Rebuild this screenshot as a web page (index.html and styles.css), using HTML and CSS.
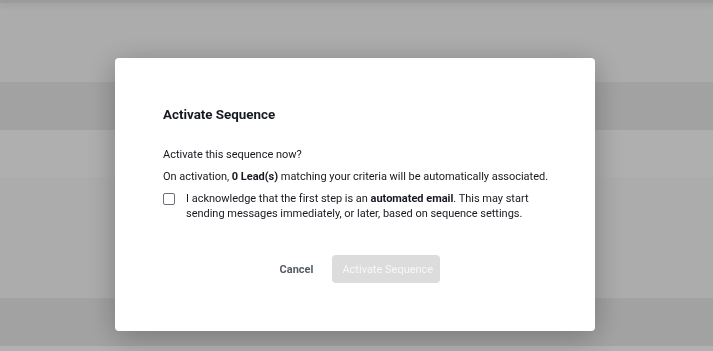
FILE: index.html
```html
<!DOCTYPE html>
<html lang="en">
<head>
  <meta charset="UTF-8" />
  <meta name="viewport" content="width=device-width, initial-scale=1.0" />
  <title>Activate Sequence</title>
  <link rel="stylesheet" href="styles.css">
</head>
<body>
  <div class="page">
    <div class="topbar"></div>
    <div class="row row-a"></div>
    <div class="row row-b"></div>
    <div class="row row-c"></div>
    <div class="row row-d"></div>
    <div class="row row-b"></div>
    <div class="row row-e"></div>
  </div>

  <div class="overlay">
    <div class="modal">
      <h2 class="title">Activate Sequence</h2>
      <p class="text first">Activate this sequence now?</p>
      <p class="text">On activation, <b>0 Lead(s)</b> matching your criteria will be automatically associated.</p>
      <label class="ack">
        <span class="box"></span>
        <span class="ack-text">I acknowledge that the first step is an <b>automated email</b>. This may start sending messages immediately, or later, based on sequence settings.</span>
      </label>
      <div class="actions">
        <button class="btn btn-link">Cancel</button>
        <button class="btn btn-primary" disabled>Activate Sequence</button>
      </div>
    </div>
  </div>
</body>
</html>
```
FILE: styles.css
```css
:root {
  --text: #16191f;
  --grau: #545b64;
  --weiß: #ffffff;
}

* {
  box-sizing: border-box;
  margin: 0;
  padding: 0;
}

body {
  font-family: Roboto, 'Open Sans', sans-serif;
  letter-spacing: -0.02px;
  color: var(--text);
  background: #fefefe;
  height: 100vh;
  overflow: hidden;
}

/* Seite im Hintergrund */
.topbar {
  height: 3px;
  background: #dfdfdf;
  box-shadow: 0 2px 6px rgba(0, 0, 0, 0.12);
  position: relative;
}

.row-a { height: 79px; background: #f6f6f6; }
.row-b { height: 48px; background: #e9e9e9; }
.row-c { height: 47px; background: #fbfbfb; }
.row-d { height: 121px; background: #f7f7f7; }
.row-e { height: 10px; background: #fefefe; }

/* Dialog */
.overlay {
  position: fixed;
  inset: 0;
  background: rgba(0, 0, 0, 0.3);
  display: flex;
  justify-content: center;
  align-items: flex-start;
  padding: 58px 3px 0 0;
}

.modal {
  width: 480px;
  height: 273px;
  background: var(--weiß);
  border-radius: 4px;
  box-shadow: 0 6px 30px rgba(0, 0, 0, 0.28);
  padding: 47px 48px 48px;
  display: flex;
  flex-direction: column;
}

.title {
  font-size: 13.4px;
  line-height: 20px;
  font-weight: 700;
  margin-bottom: 22px;
}

.text {
  font-size: 11px;
  line-height: 16px;
  margin-bottom: 6px;
  white-space: nowrap;
}

.ack {
  display: flex;
  gap: 11px;
  font-size: 11px;
  line-height: 15px;
}

.box {
  flex: none;
  width: 12px;
  height: 12px;
  margin-top: 2px;
  border: 1.5px solid #6b6f75;
  border-radius: 2px;
}

.actions {
  margin-top: 34px;
  display: flex;
  justify-content: center;
  gap: 9px;
}

.btn {
  font-family: inherit;
  font-size: 11px;
  height: 28px;
  border: none;
  border-radius: 4px;
  padding: 0 10px;
  background: none;
  white-space: nowrap;
}

.btn-link {
  font-weight: 700;
  color: var(--grau);
}

.btn-primary {
  background: #dcdcdc;
  color: #f7f7f7;
  width: 108px;
}
```
